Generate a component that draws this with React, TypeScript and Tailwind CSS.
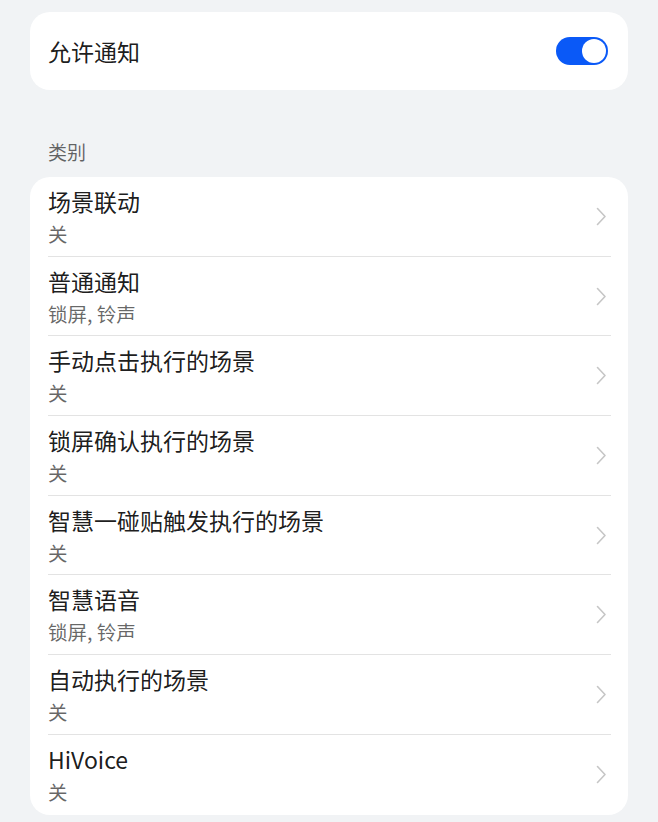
const categories = [
  { title: '场景联动', sub: '关' },
  { title: '普通通知', sub: '锁屏, 铃声' },
  { title: '手动点击执行的场景', sub: '关' },
  { title: '锁屏确认执行的场景', sub: '关' },
  { title: '智慧一碰贴触发执行的场景', sub: '关' },
  { title: '智慧语音', sub: '锁屏, 铃声' },
  { title: '自动执行的场景', sub: '关' },
  { title: 'HiVoice', sub: '关' },
];

const Chevron = () => (
  <svg width="11" height="19" viewBox="0 0 11 19" fill="none" className="shrink-0">
    <path d="M1.5 1.5 L9 9.5 L1.5 17.5" stroke="#c6c6c6" strokeWidth="1.6" strokeLinecap="round" strokeLinejoin="round" />
  </svg>
);

const Toggle = () => (
  <div className="w-[52px] h-[28px] rounded-full bg-[#0a59f7] flex items-center justify-end pr-[2px]">
    <div className="w-[24px] h-[24px] rounded-full bg-white" />
  </div>
);

export default function App() {
  return (
    <div
      className="min-h-screen w-full bg-[#f1f3f5] px-[30px] pt-3 pb-2"
      style={{ fontFamily: '"Noto Sans CJK SC", "Noto Sans", sans-serif' }}
    >
      <div className="h-[78px] rounded-[20px] bg-white pl-[18px] pr-5 flex items-center justify-between">
        <span className="text-[23px] leading-[30px] text-[rgba(0,0,0,0.9)]">允许通知</span>
        <Toggle />
      </div>

      <div className="mt-[49px] mb-3 pl-[18px] h-[26px] leading-[26px] text-[19px] text-[rgba(0,0,0,0.6)]">类别</div>

      <div className="rounded-[20px] bg-white">
        {categories.map((c, i) => (
          <div key={c.title} className="pl-[18px] pr-[17px]">
            <div
              className={`h-[79.7px] flex items-center justify-between pr-1 ${
                i < categories.length - 1 ? 'border-b border-[#e3e3e3]' : ''
              }`}
            >
              <div className="flex flex-col">
                <span className="text-[23px] leading-[30px] text-[rgba(0,0,0,0.9)]">{c.title}</span>
                <span className="mt-[5px] text-[19.5px] leading-[26px] text-[rgba(0,0,0,0.6)]">{c.sub}</span>
              </div>
              <Chevron />
            </div>
          </div>
        ))}
      </div>
    </div>
  );
}
